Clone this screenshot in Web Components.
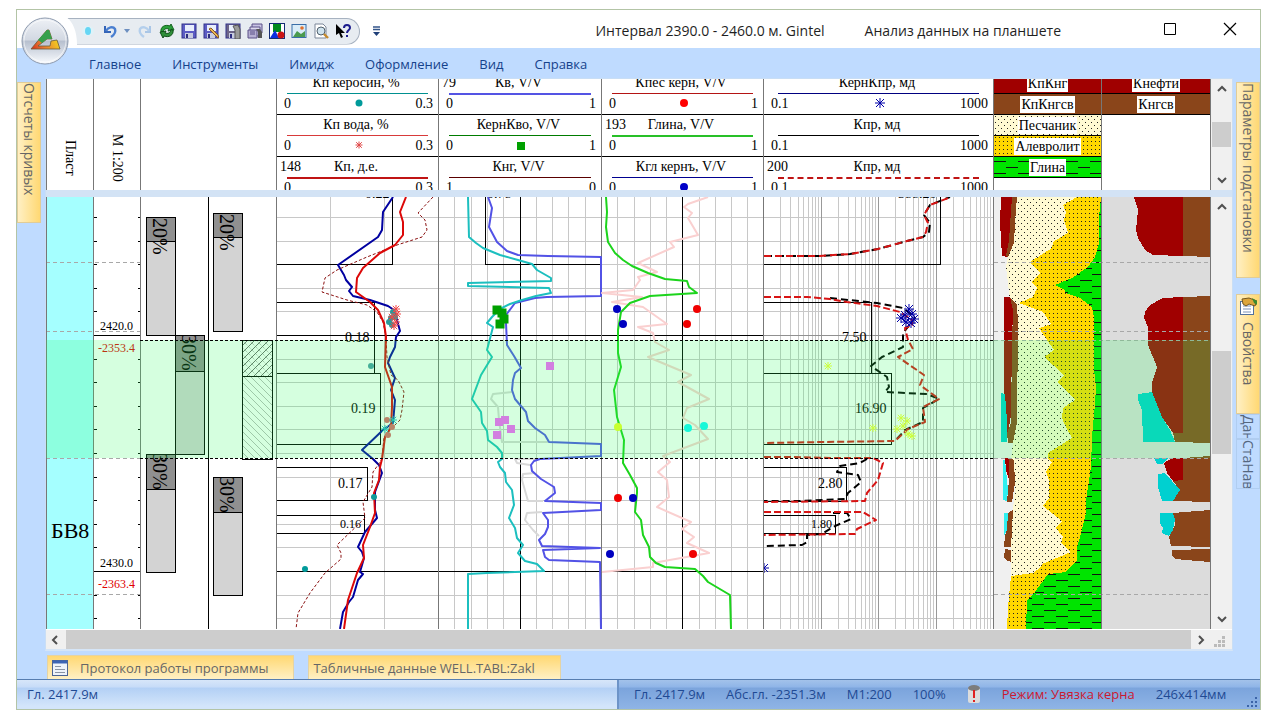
<!DOCTYPE html>
<html lang="ru">
<head>
<meta charset="utf-8">
<title>Gintel</title>
<style>
    body {
        margin: 9px 19px 10px 16px;
        background: #fff;
        font-family: "Open Sans", "Noto Sans", sans-serif;
        font-size: 13px;
        color: #15428b;
    }
</style>
</head>
<body>
<gi-window>
    <gi-titlebar slot="title" doc="Интервал 2390.0 - 2460.0 м. Gintel" view="Анализ данных на планшете"></gi-titlebar>
    <gi-menu slot="menu">
        <a href="#main">Главное</a>
        <a href="#tools">Инструменты</a>
        <a href="#image">Имидж</a>
        <a href="#design">Оформление</a>
        <a href="#view">Вид</a>
        <a href="#help">Справка</a>
    </gi-menu>
    <gi-sidetab slot="left" size="tall">Отсчеты кривых</gi-sidetab>
    <gi-legend slot="center"></gi-legend>
    <gi-welllog slot="center"></gi-welllog>
    <gi-sidetab slot="right" size="long">Параметры подстановки</gi-sidetab>
    <gi-sidetab slot="right" size="mid" icon>Свойства</gi-sidetab>
    <gi-sidetab slot="right" size="cell">Дан</gi-sidetab>
    <gi-sidetab slot="right" size="cell">СтаНав</gi-sidetab>
    <gi-docktab slot="dock" icon>Протокол работы программы</gi-docktab>
    <gi-docktab slot="dock">Табличные данные WELL.TABL:Zakl</gi-docktab>
    <gi-status slot="status"></gi-status>
</gi-window>

<script>
class GiElement extends HTMLElement {
    connectedCallback() {
        this.attachShadow({ mode: 'open' });
        this.shadowRoot.innerHTML = this.render();
    }

    render() {
        return '<slot></slot>';
    }
}

class GiWindow extends GiElement {
    render() {
        return `
            <style>
                :host {
                    display: block;
                    border: 1px solid #b3c4a6;
                    background: #bfdbff;
                }
                .work {
                    display: grid;
                    grid-template-columns: 28px minmax(0, 1fr) 27px;
                }
                .left, .right {
                    padding-top: 4px;
                    display: flex;
                    flex-direction: column;
                }
                .left { padding-right: 4px; }
                .right { padding-left: 3px; }
                .center {
                    border: 1px solid #c9def5;
                    border-bottom: 2px solid #d5e5f7;
                    background: #fff;
                }
                .dock {
                    display: flex;
                    gap: 14px;
                    padding: 4px 30px 0;
                    height: 24px;
                }
            </style>
            <slot name="title"></slot>
            <slot name="menu"></slot>
            <main class="work">
                <div class="left"><slot name="left"></slot></div>
                <div class="center"><slot name="center"></slot></div>
                <div class="right"><slot name="right"></slot></div>
            </main>
            <div class="dock"><slot name="dock"></slot></div>
            <slot name="status"></slot>
        `;
    }
}

const floppy = `
    <rect x="1" y="1" width="14" height="14" fill="#5c5cc4"/>
    <rect x="1" y="1" width="14" height="14" fill="none" stroke="#33338c"/>
    <rect x="4" y="2" width="9" height="6" fill="#e8eefc"/>
    <rect x="4" y="10" width="8" height="5" fill="#c8cce0"/>
    <rect x="5" y="11" width="2" height="4" fill="#2c2c80"/>`;

const tools = [
    ['Маркер', '<ellipse cx="8" cy="8" rx="6" ry="5" fill="#dff2f8"/><ellipse cx="8" cy="8" rx="3" ry="4" fill="#66d6f4"/>'],
    ['Отменить', '<path d="M3 3v6h6" fill="none" stroke="#3465b8" stroke-width="2"/><path d="M4 8c2-4 7-5 9-2 1 3-1 6-4 8" fill="none" stroke="#4a7fd0" stroke-width="2.4"/>'],
    ['Список отмен', '<path d="M0 6h6l-3 4z" fill="#6d8fc0"/>', 7],
    ['Повторить', '<path d="M13 3v6H8" fill="none" stroke="#a9c6e6" stroke-width="2"/><path d="M12 8C10 4 5 3 3 6c-1 3 1 6 4 8" fill="none" stroke="#b4cfec" stroke-width="2.4"/>'],
    ['Обновить', '<path d="M2 9C1 4 6 1 11 3l1-2 3 6-6 1 1-2C7 5 4 6 4 10z" fill="#2aa03a" stroke="#14621e"/><path d="M14 7c1 5-4 8-9 6l-1 2-3-6 6-1-1 2c3 1 6 0 6-4z" fill="#2f8f3a" stroke="#0f4d18"/>'],
    ['Сохранить', floppy],
    ['Сохранить как', floppy + '<path d="M6 6l8 8 2 1-1-3-7-7z" fill="#e9b65a" stroke="#8a5a1c"/>'],
    ['Сохранить вид', floppy.replace('#5c5cc4', '#6d6588') + '<path d="M8 3l5-1 2 4v10h-5V7z" fill="#9a9a9a" stroke="#555"/>'],
    ['Сохранить все', '<path d="M5 1h10v9H5z" fill="#c8c3e4" stroke="#5a5188"/><path d="M3 4h10v9H3z" fill="#dcd9ee" stroke="#5a5188"/><path d="M1 7h9v8H1z" fill="#b5afd2" stroke="#5a5188"/><path d="M3 9h5M3 11h5" stroke="#5a5188"/><path d="M9 6h4l2 3v6h-4V9z" fill="#555"/>'],
    ['Фигуры', '<rect width="16" height="16" fill="#152c74"/><rect x="1" y="1" width="14" height="14" fill="#fff"/><rect x="4" y="1" width="8" height="8" fill="#008a1c"/><path d="M1 15l5-8 4 8z" fill="#0a2ee0"/><circle cx="12" cy="12" r="3.5" fill="#cc1414"/>'],
    ['Изображение', '<rect x="1" y="1.5" width="14" height="13" fill="#d9ecf8" stroke="#3a6ea8"/><path d="M2 14l4-6 4 3 4-3v6z" fill="#4a9a4e"/><circle cx="11" cy="5" r="1.8" fill="#e0702c"/>'],
    ['Просмотр', '<path d="M2 1h8l3 3v11H2z" fill="#fff" stroke="#7a8698"/><circle cx="8" cy="8" r="4" fill="#cfe3ee" stroke="#51606c"/><path d="M11 11l4 4" stroke="#c58a2c" stroke-width="2.4"/>'],
    ['Справка', '<path d="M1 1v11l3-2 2 5 2-1-2-4h4z" fill="#000"/><path d="M9 5c0-4 6-4 6 0 0 2-3 2-3 5M12 12v2" fill="none" stroke="#1c1c8c" stroke-width="2"/>']
];

class GiTitlebar extends GiElement {
    render() {
        return `
            <style>
                :host {
                    display: flex;
                    align-items: center;
                    height: 38px;
                    background: #fff;
                    position: relative;
                    color: #1f1f1f;
                }
                button {
                    border: 0;
                    padding: 0;
                    background: none;
                    display: block;
                }
                svg { display: block; }
                .orb {
                    position: absolute;
                    left: 4px;
                    top: 7px;
                    z-index: 2;
                }
                .quick {
                    display: flex;
                    align-items: center;
                    gap: 6px;
                    box-sizing: border-box;
                    height: 27px;
                    margin: 4px 0 0 50px;
                    padding: 0 8px 0 13px;
                    background: #e7ecf1;
                    border: 1px solid #a7b2c0;
                    border-left: 0;
                    border-radius: 0 14px 14px 0;
                    clip-path: path("M0 0h400v27H10C10 14 6 5 0 0z");
                }
                .more { margin: 4px 0 0 10px; }
                .titles {
                    margin-left: auto;
                    display: flex;
                    gap: 40px;
                    padding: 2px 102px 0 0;
                    font-size: 14px;
                    white-space: nowrap;
                }
                .buttons {
                    display: flex;
                    gap: 44px;
                    padding-right: 22px;
                }
            </style>
            <button class="orb" aria-label="Меню приложения">
                <svg width="48" height="48" viewBox="0 0 48 48">
                    <defs>
                        <linearGradient id="o" x1="0" y1="0" x2="0" y2="1">
                            <stop offset="0" stop-color="#eef1f6"/>
                            <stop offset=".48" stop-color="#d2d8e2"/>
                            <stop offset=".5" stop-color="#b6bfce"/>
                            <stop offset="1" stop-color="#fafcff"/>
                        </linearGradient>
                        <linearGradient id="t" x1="0" y1="1" x2="1" y2=".6">
                            <stop offset="0" stop-color="#d22c18"/>
                            <stop offset=".4" stop-color="#e87830"/>
                            <stop offset="1" stop-color="#f4d81e"/>
                        </linearGradient>
                    </defs>
                    <circle cx="24" cy="24" r="23" fill="url(#o)" stroke="#8d9aae"/>
                    <circle cx="24" cy="24" r="21" fill="none" stroke="#fff" opacity=".6"/>
                    <path d="M10 32L26 13l2 0 3 9-5 0-9 7h12l1-5 6-1 3 9z" fill="url(#t)" stroke="#6a5a38" stroke-width=".8"/>
                    <path d="M17 23l9-10h2l3 9h-5l-5 4z" fill="#35a04c"/>
                </svg>
            </button>
            <div class="quick">
                ${tools.map(([label, art, width = 16]) => `
                    <button aria-label="${label}"><svg width="${width}" height="16">${art}</svg></button>
                `).join('')}
            </div>
            <button class="more" aria-label="Настройка панели"><svg width="12" height="12"><path d="M3 2h7M3 4.5h7" stroke="#34568a" stroke-width="1.4"/><path d="M3 7h7l-3.500 4z" fill="#1f3f78"/></svg></button>
            <div class="titles"><span>${this.getAttribute('doc')}</span><span>${this.getAttribute('view')}</span></div>
            <div class="buttons">
                <button aria-label="Развернуть"><svg width="15" height="14"><path d="M1.500 1.500h11v11h-11z" fill="none" stroke="#000"/></svg></button>
                <button aria-label="Закрыть"><svg width="16" height="14"><path d="M2 1l12 12M14 1L2 13" stroke="#000" stroke-width="1.2"/></svg></button>
            </div>
        `;
    }
}

class GiMenu extends GiElement {
    render() {
        return `
            <style>
                :host {
                    display: flex;
                    align-items: center;
                    gap: 31px;
                    height: 30px;
                    padding: 1px 72px 0;
                    box-sizing: border-box;
                }
                ::slotted(a) {
                    color: #15428b;
                    text-decoration: none;
                }
            </style>
            <slot></slot>
        `;
    }
}

class GiSidetab extends GiElement {
    render() {
        return `
            <style>
                :host { display: block; }
                button {
                    box-sizing: border-box;
                    width: 100%;
                    height: 141px;
                    padding: 0;
                    display: flex;
                    align-items: center;
                    gap: 7px;
                    writing-mode: vertical-rl;
                    overflow: hidden;
                    white-space: nowrap;
                    border: 1px solid #e0cc98;
                    background: linear-gradient(to right, #fff0c4, #ffd873);
                    font: 14px "Open Sans", sans-serif;
                    color: #666;
                }
                :host([size=long]) button { height: 196px; }
                :host([size=mid]) { margin-top: 16px; }
                :host([size=mid]) button { height: 120px; padding-top: 2px; }
                :host([size=cell]) button {
                    height: 25px;
                    border-color: #b0cdf0;
                    background: #bfdbff;
                    color: #55677f;
                }
                :host([size=cell]:last-of-type) button { height: 50px; }
            </style>
            <button>
                ${this.hasAttribute('icon') ? `
                    <svg width="18" height="18">
                        <rect x="1.500" y="4.500" width="13" height="13" fill="#fff" stroke="#51709c"/>
                        <path d="M4 9h8M4 12h8M4 15h8" stroke="#7c93b8"/>
                        <path d="M3 2l7-1 8 3-2 5-6-2-3 2-3-2z" fill="#dca53c" stroke="#735620"/>
                        <path d="M13 1l5 3v4l-3-2z" fill="#3c8a30"/>
                    </svg>` : ''}
                <slot></slot>
            </button>
        `;
    }
}

class GiScroll extends GiElement {
    render() {
        const vertical = this.hasAttribute('vertical');
        const [before, thumb, after] = this.getAttribute('parts').split(' ');
        const arrow = (label, d) => `
            <button aria-label="${label}"><svg width="12" height="12"><path d="${d}" fill="none" stroke="#505050" stroke-width="2"/></svg></button>`;
        return `
            <style>
                :host {
                    display: flex;
                    flex-direction: ${vertical ? 'column' : 'row'};
                    background: #f0f0f0;
                }
                button {
                    flex: none;
                    width: ${vertical ? 21 : 20}px;
                    height: ${vertical ? 20 : 19}px;
                    border: 0;
                    padding: 0;
                    display: grid;
                    place-items: center;
                    background: none;
                }
                .thumb {
                    background: #cdcdcd;
                    margin: ${vertical ? '0 1px' : '0'};
                    flex: ${thumb} 1 0;
                }
                .before { flex: ${before} 1 0; }
                .after { flex: ${after} 1 0; }
            </style>
            ${vertical ? arrow('Вверх', 'M2 8l4-4 4 4') : arrow('Влево', 'M7 2L3 6l4 4')}
            <div class="before"></div><div class="thumb"></div><div class="after"></div>
            ${vertical ? arrow('Вниз', 'M2 4l4 4 4-4') : arrow('Вправо', 'M4 2l4 4-4 4')}
        `;
    }
}

// marker glyphs shared by the legend and the plot
function star(x, y, r, color) {
    const d = r * 0.8;
    return `<path d="M${x - r} ${y}h${2 * r}M${x} ${y - r}v${2 * r}M${x - d} ${y - d}l${2 * d} ${2 * d}M${x + d} ${y - d}l${-2 * d} ${2 * d}" stroke="${color}" fill="none"/>`;
}
const dot = (x, y, color, r = 4) => `<circle cx="${x}" cy="${y}" r="${r}" fill="${color}"/>`;
const square = (x, y, color, s = 8) => `<rect x="${x - s / 2}" y="${y - s / 2}" width="${s}" height="${s}" fill="${color}"/>`;

const fillPatterns = `
    <pattern id="sand" width="6" height="6" patternUnits="userSpaceOnUse">
        <rect width="6" height="6" fill="#fffad2"/>
        <path d="M1 1h1v1h-1zM4 4h1v1h-1z" fill="#222"/>
    </pattern>
    <pattern id="silt" width="4" height="4" patternUnits="userSpaceOnUse">
        <rect width="4" height="4" fill="#ffd700"/>
        <path d="M1 1h1v1h-1z" fill="#222"/>
    </pattern>
    <pattern id="clay" width="24" height="12" patternUnits="userSpaceOnUse">
        <rect width="24" height="12" fill="#00e400"/>
        <path d="M0 4h12v1H0zM12 10h12v1H12z" fill="#111"/>
    </pattern>`;

const tracks = [
    { width: 47, side: 'Пласт' },
    { width: 47, side: 'М 1:200' },
    { width: 136 },
    { width: 162, curves: [
        { name: 'Кп керосин, %', min: '0', max: '0.3', color: '#009090', mark: dot(7, 7, '#009a9a', 3.5) },
        { name: 'Кп вода, %', min: '0', max: '0.3', color: '#d83a3a', mark: star(7, 7, 3.5, '#e04848') },
        { name: 'Кп, д.е.', min: '0', max: '0.3', color: '#c01414', weight: 2, num: '148' }
    ] },
    { width: 163, curves: [
        { name: 'Кв, V/V', min: '0', max: '1', color: '#5454e4', weight: 2, num: '79' },
        { name: 'КернКво, V/V', min: '0', max: '1', color: '#007c00', mark: square(7, 8, '#00a000') },
        { name: 'Кнг, V/V', min: '1', max: '0', color: '#5a0000' }
    ] },
    { width: 162, curves: [
        { name: 'Кпес керн, V/V', min: '0', max: '1', color: '#b41414', mark: dot(7, 7, '#ff0000') },
        { name: 'Глина, V/V', min: '0', max: '1', color: '#28c028', weight: 2, num: '193' },
        { name: 'Кгл кернъ, V/V', min: '0', max: '1', color: '#000090', mark: dot(7, 7, '#0000c8') }
    ] },
    { width: 230, curves: [
        { name: 'КернКпр, мд', min: '0.1', max: '1000', color: '#000080', mark: star(7, 7, 5, '#0000a8') },
        { name: 'Кпр, мд', min: '0.1', max: '1000', color: '#000' },
        { name: 'Кпр, мд', min: '0.1', max: '1000', color: '#c01414', weight: 2, dashed: true, num: '200' }
    ] },
    { width: 108, fills: [['КпКнг', 'red'], ['КпКнгсв', 'brown'], ['Песчаник', 'sand'], ['Алевролит', 'silt'], ['Глина', 'clay']] },
    { width: 110, fills: [['Кнефти', 'red'], ['Кнгсв', 'brown']] }
];

class GiLegend extends GiElement {
    render() {
        return `
            <style>
                :host {
                    display: grid;
                    grid-template-columns: minmax(0, 1fr) 21px;
                    height: 111px;
                    border-bottom: 7px solid #d3e3f5;
                    font: 14px/18px "Liberation Serif", serif;
                    color: #000;
                }
                .tracks {
                    display: grid;
                    grid-template-columns: ${tracks.map(t => t.width + 'fr').join(' ')};
                    overflow: hidden;
                }
                .track {
                    border-left: 1px solid #777;
                    min-width: 0;
                }
                .track:last-child { border-right: 1px solid #777; }
                .list { margin-top: -6px; }
                .side {
                    width: 100%;
                    height: 111px;
                    writing-mode: vertical-rl;
                    display: flex;
                    align-items: center;
                    justify-content: center;
                    box-sizing: border-box;
                    padding-top: 46px;
                }
                .curve {
                    box-sizing: border-box;
                    height: 42px;
                    border-bottom: 1px solid #000;
                    display: grid;
                    grid-template-rows: 19px 3px 18px;
                }
                .top, .scale {
                    display: grid;
                    grid-template-columns: 1fr auto 1fr;
                }
                .top { padding: 1px 6px 0 3px; }
                .scale { padding: 0 5px 0 7px; }
                .scale span:last-child { text-align: right; }
                .rule { margin: 0 6%; align-self: center; }
                .scale svg { display: block; margin-top: 1px; }
                .fill {
                    box-sizing: border-box;
                    height: 21px;
                    border-bottom: 1px solid #000;
                    display: grid;
                    place-items: center;
                    position: relative;
                }
                .fill svg {
                    position: absolute;
                    inset: 0;
                    width: 100%;
                    height: 100%;
                }
                .fill span {
                    position: relative;
                    background: #fff;
                    line-height: 17px;
                    padding: 0 1px;
                }
                .red { background: #a00000; }
                .brown { background: #8a451a; }
            </style>
            <div class="tracks">${tracks.map(t => this.renderTrack(t)).join('')}</div>
            <gi-scroll vertical parts="23 25 23"></gi-scroll>
        `;
    }

    renderTrack(track) {
        if (track.side) {
            return `<div class="track"><div class="side">${track.side}</div></div>`;
        }
        const rows = (track.curves || []).map(c => `
            <div class="curve">
                <div class="top"><span>${c.num || ''}</span><span>${c.name}</span><span></span></div>
                <div class="rule" style="border-top: ${c.weight || 1}px ${c.dashed ? 'dashed' : 'solid'} ${c.color}"></div>
                <div class="scale"><span>${c.min}</span><svg width="14" height="16">${c.mark || ''}</svg><span>${c.max}</span></div>
            </div>`);
        const fills = (track.fills || []).map(([name, kind]) => `
            <div class="fill ${kind}">
                ${kind === 'red' || kind === 'brown' ? '' : `<svg><defs>${fillPatterns}</defs><rect width="100%" height="100%" fill="url(#${kind})"/></svg>`}
                <span>${name}</span>
            </div>`);
        return `<div class="track"><div class="list">${rows.join('')}${fills.join('')}</div></div>`;
    }
}

// plot coordinates: x runs 46..1211 over the tracks, y runs 197..629 down the hole
const TOP = 197;
const BOTTOM = 629;
const depthStep = 23.6;
const depthLines = Array.from({ length: 18 }, (_, i) => Math.round(335 + (i - 5) * depthStep));

const curves = [
    { color: '#0000a0', points: '393,197 383,212 382,230 378,237 338,265 344,275 346,280 352,287 349,291 353,296 370,300 388,306 394,310 397,320 400,331 396,337 395,347 390,357 388,363 395,378 391,390 395,400 393,423 383,430 362,450 373,459 379,465 382,473 375,492 375,510 377,518 365,532 358,547 362,552 364,558 360,572 363,574 358,580 353,597 349,602 343,612 340,629' },
    { color: '#8a1010', width: 1, dash: '3 2', points: '433,197 418,213 425,220 427,230 422,237 397,245 367,257 337,270 325,278 322,292 347,300 367,305 377,312 383,322 386,337 387,357 391,375 398,380 404,392 402,410 400,420 393,427 384,437 382,459 378,465 373,472 372,487 363,502 365,518 337,545 341,553 341,559 325,573 310,593 298,613 296,629' },
    { color: '#dc0808', points: '406,197 400,212 403,222 403,235 395,245 380,253 363,268 357,278 356,292 370,302 378,310 384,323 386,337 385,367 392,387 392,407 391,427 385,437 382,459 380,467 379,480 374,493 375,513 370,527 363,545 364,558 357,573 348,600 344,629' },
    { color: '#d8d8d8', points: '512,392 493,394 491,399 498,407 499,420 502,442 548,442' },
    { color: '#d8d8d8', points: '540,459 515,459 517,463 530,465' },
    { color: '#d8d8d8', points: '535,473 523,474 522,480 528,501 543,501' },
    { color: '#d8d8d8', points: '542,512 527,513 525,520 533,530 539,536' },
    { color: '#5252e6', points: '488,197 492,208 489,227 497,242 507,251 518,255 548,256 601,257 601,296 547,297 535,298 515,303 506,315 506,323 507,345 514,356 521,368 515,373 513,380 512,390 515,399 526,412 528,421 535,428 545,435 549,442 601,444 601,456 540,459 534,461 531,465 532,471 541,479 554,487 555,493 545,501 601,503 601,510 543,513 548,520 548,527 545,534 539,540 542,546 600,548 543,550 545,557 549,560 600,562 601,629' },
    { color: '#1cbfbf', points: '468,197 469,237 476,243 483,248 500,255 518,260 532,264 537,270 544,274 551,278 551,281 468,283 468,286 549,288 551,293 536,296 522,300 510,304 500,309 492,317 487,323 493,327 487,350 492,357 481,375 472,399 481,412 482,423 487,431 488,440 497,447 502,453 502,459 498,462 500,467 505,473 506,482 512,490 514,505 509,518 515,528 517,538 523,545 518,553 525,561 537,564 544,571 487,573 468,574 468,629' },
    { color: '#fad0d0', points: '708,197 688,204 684,207 692,213 688,218 698,235 670,242 674,247 638,263 657,272 638,277 640,280 633,290 602,293 642,297 612,302 643,307 667,324 638,327 653,333 655,342 669,350 648,357 691,375 678,382 709,399 687,408 683,418 695,425 708,439 663,456 670,462 658,472 667,480 669,497 657,507 691,522 682,529 694,537 687,543 709,553 653,563 653,567 602,572' },
    { color: '#1cd41c', points: '606,197 607,212 606,227 608,242 615,253 623,260 632,266 648,273 665,279 687,281 689,287 697,293 650,296 630,303 621,312 618,330 618,353 621,367 614,390 617,417 624,440 623,463 630,475 637,488 637,493 635,512 641,520 643,535 649,547 650,557 656,563 665,567 695,569 703,576 708,582 730,595 731,629' },
    { color: '#000', dash: '8 4', points: '764,256 820,256 850,254 878,249 907,241 923,237 929,232 930,223 924,215 930,205 950,197' },
    { color: '#000', dash: '7 4', points: '830,298 877,303 903,308 915,318 903,333 903,347 882,357 871,366 887,377 889,387 885,392 927,394 939,399 923,408 923,422 905,430 895,441' },
    { color: '#000', dash: '7 4', points: '867,459 860,463 840,466 837,472 858,475 861,482 848,493 845,499 800,501 764,501' },
    { color: '#000', dash: '7 4', points: '833,513 847,513 851,519 833,527 822,534 807,535 807,542 802,545 764,546' },
    { color: '#d81414', dash: '7 4', points: '764,256 820,256 850,254 878,249 907,241 923,237 926,232 928,223 924,215 930,205 951,197' },
    { color: '#d81414', dash: '7 3', points: '764,297 807,297 830,299 847,302 877,306 900,312 912,320 912,325 905,328 908,340 913,349 898,357 924,375 920,385 939,399 923,407 925,422 908,429 895,441 822,442 764,443' },
    { color: '#d81414', dash: '7 3', points: '764,457 793,457 833,458 873,458 883,463 878,480 867,493 865,501 764,502' },
    { color: '#d81414', dash: '7 3', points: '764,512 863,512 876,520 857,529 855,534 764,535' }
];

// blocked average values, drawn as steps from the track edge
const steps = [
    'M392.500 197V264.500H277', 'M277 302.500H374.500V373.500', 'M277 373.500H380.500V444.500H277',
    'M277 467.500H367.500V500.500H277', 'M277 515.500H364.500V533.500H277',
    'M485.500 197V264.500H601',
    'M940.500 197V264.500H764', 'M764 302.500H871.500V373.500', 'M764 373.500H891.500V444.500H764',
    'M764 467.500H846.500V501.500H764', 'M764 515.500H835.500V533.500H764'
];

const values = [
    [365, 198, '0.22'], [345, 342, '0.18'], [351, 413, '0.19'], [338, 488, '0.17'], [340, 528, '0.16', 12],
    [487, 198, '0.78'], [898, 198, '388.20'], [842, 342, '7.50'], [855, 413, '16.90'], [818, 488, '2.80'], [811, 528, '1.80', 12]
];

const lithology = [
    ['url(#sand)', '1017,197 1015,223 1014,243 1008,257 1006,267 1010,300 1016,305 1018,323 1017,343 1016,423 1013,443 1011,459 1014,465 1015,487 1013,510 1011,540 1011,576 1101,576 1101,197'],
    ['url(#silt)', '1077,197 1063,205 1066,212 1064,220 1068,233 1053,242 1052,248 1030,262 1040,273 1032,282 1037,288 1033,297 1019,303 1043,312 1051,324 1039,328 1045,337 1054,350 1044,357 1064,375 1058,382 1075,400 1063,408 1062,418 1065,425 1072,438 1048,453 1048,459 1052,462 1046,472 1049,480 1049,498 1043,506 1062,521 1056,528 1063,537 1061,543 1071,552 1042,564 1040,568 1033,573 1011,576 1008,607 1007,629 1101,629 1101,197'],
    ['url(#clay)', '1101,197 1099,217 1099,243 1095,257 1088,267 1072,278 1055,285 1065,290 1065,293 1080,298 1092,307 1094,317 1094,370 1096,387 1095,403 1092,437 1091,467 1088,487 1086,500 1086,513 1080,537 1077,548 1077,560 1066,572 1048,574 1032,596 1027,600 1026,629 1101,629'],
    ['#a00000', '1001,197 1012,197 1011,220 1009,240 1007,257 1002,256 1000,223'],
    ['#8a451a', '1012,197 1017,197 1015,223 1014,243 1008,257 1006,256 1009,240'],
    ['#a00000', '1004,297 1010,297 1013,310 1012,340 1011,415 1008,433 1007,430 1004,400'],
    ['#8a451a', '1010,297 1017,305 1018,323 1017,423 1013,443 1008,443 1007,433 1011,423 1012,343 1013,310'],
    ['#00d0d0', '1001,393 1005,394 1007,420 1007,442 1001,442'],
    ['#a00000', '1005,458 1009,458 1009,480 1006,470'],
    ['#8a451a', '1009,458 1014,460 1015,483 1012,502 1007,502 1009,480'],
    ['#30f0f0', '1003,460 1005,460 1008,490 1007,501 1003,500'],
    ['#8a451a', '1008,513 1013,510 1011,547 1004,547 1005,535 1007,530'],
    ['#30f0f0', '1004,513 1008,513 1007,530 1004,536'],
    ['#8a451a', '1005,549 1011,550 1011,562 1006,560 1004,557'],
    ['#a00000', '1134,197 1138,210 1136,230 1138,238 1145,250 1153,255 1183,256 1183,197'],
    ['#8a451a', '1183,197 1210,197 1210,257 1183,256'],
    ['#a00000', '1183,297 1163,298 1150,305 1145,312 1144,318 1148,327 1148,345 1157,367 1152,383 1152,392 1162,417 1173,433 1183,433'],
    ['#8a451a', '1183,297 1210,296 1210,443 1175,442 1173,433 1183,433'],
    ['#00d0d0', '1138,394 1152,392 1162,417 1170,430 1175,442 1143,442 1142,410 1138,400'],
    ['#00d0d0', '1154,458 1168,458 1163,464 1157,464'],
    ['#a00000', '1164,463 1172,458 1183,458 1183,480 1173,481 1167,473'],
    ['#8a451a', '1183,458 1210,456 1210,502 1173,501 1180,490 1173,481 1183,480'],
    ['#00d0d0', '1158,474 1165,473 1180,490 1173,501 1162,501 1158,487'],
    ['#8a451a', '1173,513 1210,510 1210,547 1171,546 1169,537 1175,525'],
    ['#00d0d0', '1160,513 1173,513 1175,520 1173,530 1169,536 1162,533 1163,528 1160,523'],
    ['#8a451a', '1172,550 1210,549 1210,562 1175,559 1172,556']
];

// core samples: x, top, end of the dark part, bottom, label
const cores = [
    [146, 217, 241, 335, '20%'],
    [213, 213, 237, 331, '20%'],
    [175, 335, 371, 454, '30%'],
    [146, 454, 489, 572, '30%'],
    [213, 477, 512, 595, '30%']
];

class GiWelllog extends GiElement {
    render() {
        return `
            <style>
                :host {
                    display: grid;
                    grid-template-columns: minmax(0, 1fr) 21px;
                }
                svg { display: block; width: 100%; }
                text { font-family: "Liberation Serif", serif; }
                .bottom {
                    grid-column: 1 / 3;
                    display: grid;
                    grid-template-columns: minmax(0, 1fr) 21px;
                    height: 19px;
                    border-top: 1px solid #fff;
                    background: #f0f0f0;
                }
                .grip { align-self: end; width: 18px; }
            </style>
            <svg viewBox="46 197 1165 432">
                <defs>
                    ${fillPatterns}
                    <pattern id="cross" width="7" height="7" patternUnits="userSpaceOnUse">
                        <path d="M-1 8L8 -1" stroke="#444" stroke-width=".8"/><path d="M0 0l7 7" stroke="#777" stroke-width=".7" stroke-dasharray="1 1"/>
                    </pattern>
                    <pattern id="hatch" width="7" height="7" patternUnits="userSpaceOnUse">
                        <path d="M-1 -1l9 9" stroke="#aaa" stroke-width=".8"/>
                    </pattern>
                    <clipPath id="perm"><rect x="764" y="197" width="229" height="432"/></clipPath>
                </defs>
                <g shape-rendering="crispEdges">
                    <rect x="46" y="197" width="47" height="432" fill="#a5ffff"/>
                    <rect x="993" y="197" width="108" height="432" fill="#f0f0f0"/>
                    <rect x="1101" y="197" width="109" height="432" fill="#dcdcdc"/>
                    ${this.renderGrid()}
                </g>
                ${this.renderCores()}
                <g shape-rendering="crispEdges">
                    ${lithology.map(([fill, points]) => `<polygon points="${points}" fill="${fill}"/>`).join('')}
                    <path d="M46 262.500H140M46 331.500H140M46 458.500H140M46 594.500H140M994 262.500H1210M994 331.500H1210M994 340.500H1210M994 458.500H1210M994 594.500H1210" stroke="#a8a8a8" stroke-dasharray="4 3"/>
                    <path d="${steps.join('')}" fill="none" stroke="#000"/>
                    ${[46, 93, 140, 276, 438, 601, 763, 993, 1101, 1210].map(x => `<path d="M${x}.5 197V629" stroke="#777"/>`).join('')}
                    <path d="M208.500 197V629" stroke="#000"/>
                </g>
                ${values.map(([x, y, text, size = 14]) => `<text x="${x}" y="${y}" font-size="${size}">${text}</text>`).join('')}
                ${curves.map(c => `<polyline points="${c.points}" fill="none" stroke="${c.color}" stroke-width="${c.width || 2}" ${c.dash ? `stroke-dasharray="${c.dash}"` : ''} stroke-linejoin="round"/>`).join('')}
                ${this.renderMarks()}
                <text x="100" y="330" font-size="12">2420.0</text>
                <text x="98" y="352" font-size="12" fill="#e00000">-2353.4</text>
                <text x="100" y="567" font-size="12">2430.0</text>
                <text x="98" y="588" font-size="12" fill="#e00000">-2363.4</text>
                <text x="51" y="538" font-size="22">БВ8</text>
                <rect x="46" y="340" width="1164" height="118" fill="#2dff5f" fill-opacity=".2"/>
                <path d="M140 340.500H993M140 458.500H993" stroke="#000" stroke-dasharray="3 2" shape-rendering="crispEdges"/>
                ${this.renderShadedMarks()}
            </svg>
            <gi-scroll vertical parts="134 102 155"></gi-scroll>
            <div class="bottom">
                <gi-scroll parts="0 1124 0"></gi-scroll>
                <svg class="grip" viewBox="0 0 18 14"><path d="M11 1h3v3h-3zM7 5h3v3h-3zM11 5h3v3h-3zM3 9h3v3H3zM7 9h3v3h-3zM11 9h3v3h-3z" fill="#bbb"/></svg>
            </div>
        `;
    }

    renderGrid() {
        const out = [];
        const line = (d, color) => out.push(`<path d="${d}" stroke="${color}"/>`);
        depthLines.forEach(y => {
            line(`M277 ${y}.5H993`, '#c8c8c8');
            line(`M94 ${y}.5h3M138 ${y}.5h2`, '#000');
        });
        [330, 384].forEach(x => line(`M${x}.5 ${TOP}V${BOTTOM}`, '#c8c8c8'));
        for (let i = 1; i < 10; i++) {
            const color = i === 5 ? '#000' : '#c8c8c8';
            line(`M${Math.round(438 + i * 16.3)}.5 ${TOP}V${BOTTOM}`, color);
            line(`M${Math.round(601 + i * 16.25)}.5 ${TOP}V${BOTTOM}`, color);
        }
        for (let decade = 0; decade < 4; decade++) {
            for (let n = 1; n < 10; n++) {
                const x = Math.round(763 + 57.5 * (decade + Math.log10(n)));
                line(`M${x}.5 ${TOP}V${BOTTOM}`, n === 1 ? '#999' : '#c8c8c8');
            }
        }
        line('M93 335.500H140M93 571.500H140M277 335.500H763M277 571.500H763', '#000');
        line('M764 335.500H993M764 571.500H993', '#909090');
        return out.join('');
    }

    renderCores() {
        const bars = cores.map(([x, top, dark, bottom, label], i) => `
            <clipPath id="c${i}"><rect x="${x}" y="${top}" width="30" height="${label === '20%' ? 60 : dark - top}"/></clipPath>
            <rect x="${x}.5" y="${top}.5" width="29" height="${bottom - top}" fill="#d3d3d3" stroke="#000"/>
            <rect x="${x}.5" y="${top}.5" width="29" height="${dark - top}" fill="#909090" stroke="#000"/>
            <g clip-path="url(#c${i})"><text transform="translate(${x + 7} ${label === '20%' ? top + 1 : top - 1}) rotate(90)" font-size="20">${label}</text></g>`);
        return bars.join('') + `
            <rect x="242.500" y="340.500" width="30" height="36" fill="url(#cross)" stroke="#000"/>
            <rect x="242.500" y="376.500" width="30" height="83" fill="url(#hatch)" stroke="#000"/>`;
    }

    renderMarks() {
        return [[393, 312], [391, 318], [389, 322], [395, 317], [392, 325]].map(([x, y]) => dot(x, y, '#2a9a9a', 3)).join('')
            + [[396, 309], [397, 314], [392, 317], [396, 322], [394, 326]].map(([x, y]) => star(x, y, 4, '#f04848')).join('')
            + dot(374, 497, '#109a9a', 3) + dot(305, 569, '#009a9a', 3)
            + [[497, 310], [502, 313], [504, 319], [500, 324]].map(([x, y]) => square(x, y, '#00a000', 9)).join('')
            + dot(617, 309, '#0000c0') + dot(623, 324, '#0000c0') + dot(697, 309, '#f00000') + dot(687, 324, '#f00000')
            + dot(618, 498, '#f00000') + dot(633, 498, '#0000c0') + dot(610, 554, '#0000c0') + dot(693, 554, '#f00000')
            + [[909, 309], [905, 315], [912, 314], [906, 322], [911, 323], [901, 318], [914, 319]].map(([x, y]) => star(x, y, 5, '#0000a8')).join('')
            + `<g clip-path="url(#perm)">${star(764, 568, 5, '#0000a8')}</g>`;
    }

    renderShadedMarks() {
        return dot(371, 366, '#44b098', 3)
            + [[387, 420], [392, 427], [388, 435]].map(([x, y]) => dot(x, y, '#b88468', 3)).join('')
            + [[393, 420], [385, 429]].map(([x, y]) => star(x, y, 4, '#20c8b0')).join('')
            + [[550, 366], [499, 422], [505, 420], [511, 429], [497, 435]].map(([x, y]) => square(x, y, '#d27fe0')).join('')
            + dot(618, 427, '#c8ff30') + dot(688, 428, '#18f8d8') + dot(704, 426, '#18f8d8')
            + [[828, 366], [873, 428], [897, 429], [901, 418], [907, 421], [903, 426], [912, 436], [908, 434]].map(([x, y]) => star(x, y, 4, '#ccff3c')).join('');
    }
}

class GiDocktab extends GiElement {
    render() {
        return `
            <style>
                :host { display: block; }
                button {
                    height: 24px;
                    box-sizing: border-box;
                    padding: 0 25px 0 4px;
                    display: flex;
                    align-items: center;
                    gap: 12px;
                    white-space: nowrap;
                    border: 1px solid #e4d3a4;
                    border-bottom: 0;
                    background: linear-gradient(#ffd873, #fff0c4);
                    font: 13px "Open Sans", sans-serif;
                    color: #666;
                }
            </style>
            <button>
                ${this.hasAttribute('icon') ? `
                    <svg width="16" height="18">
                        <rect x=".5" y="1.500" width="15" height="15" fill="#eef3fa" stroke="#4c6494"/>
                        <path d="M1 3h14" stroke="#3c64b4" stroke-width="3"/>
                        <path d="M3 7.500h6M3 10.500h10M3 13.500h10" stroke="#8a94a4"/>
                    </svg>` : ''}
                <slot></slot>
            </button>
        `;
    }
}

class GiStatus extends GiElement {
    render() {
        return `
            <style>
                :host {
                    display: grid;
                    grid-template-columns: 600px minmax(0, 1fr);
                    height: 29px;
                    border-top: 1px solid #567db0;
                    color: #1f4a94;
                }
                .part {
                    display: flex;
                    align-items: center;
                    padding: 0 0 2px 10px;
                    background: linear-gradient(#d7e6f9, #c7dcf8 24%, #b3d0f5 28%, #d3e5fa 90%);
                }
                .dark {
                    gap: 21px;
                    padding-left: 15px;
                    border-left: 2px solid #6d94c8;
                    background: linear-gradient(#a3c2ea, #8fb5e8 24%, #7ba4dc 28%, #8fb4e6);
                    position: relative;
                }
                .red { color: #cc1830; }
                .grip {
                    position: absolute;
                    right: 0;
                    bottom: 0;
                }
            </style>
            <div class="part">Гл. 2417.9м</div>
            <div class="part dark">
                <span>Гл. 2417.9м</span>
                <span>Абс.гл. -2351.3м</span>
                <span>М1:200</span>
                <span>100%</span>
                <svg width="14" height="20">
                    <rect x="1" y="3" width="12" height="16" rx="2" fill="#dcdcdc"/>
                    <ellipse cx="7" cy="4" rx="6" ry="3" fill="#7c7c7c"/>
                    <path d="M7 6v8M7 16v2" stroke="#e02020" stroke-width="2"/>
                </svg>
                <span class="red">Режим: Увязка керна</span>
                <span>246x414мм</span>
                <svg class="grip" width="14" height="12"><path d="M9 0h2v2H9zM5 4h2v2H5zM9 4h2v2H9zM1 8h2v2H1zM5 8h2v2H5zM9 8h2v2H9z" fill="#3c64a8"/></svg>
            </div>
        `;
    }
}

customElements.define('gi-scroll', GiScroll);
customElements.define('gi-window', GiWindow);
customElements.define('gi-titlebar', GiTitlebar);
customElements.define('gi-menu', GiMenu);
customElements.define('gi-sidetab', GiSidetab);
customElements.define('gi-legend', GiLegend);
customElements.define('gi-welllog', GiWelllog);
customElements.define('gi-docktab', GiDocktab);
customElements.define('gi-status', GiStatus);
</script>
</body>
</html>
